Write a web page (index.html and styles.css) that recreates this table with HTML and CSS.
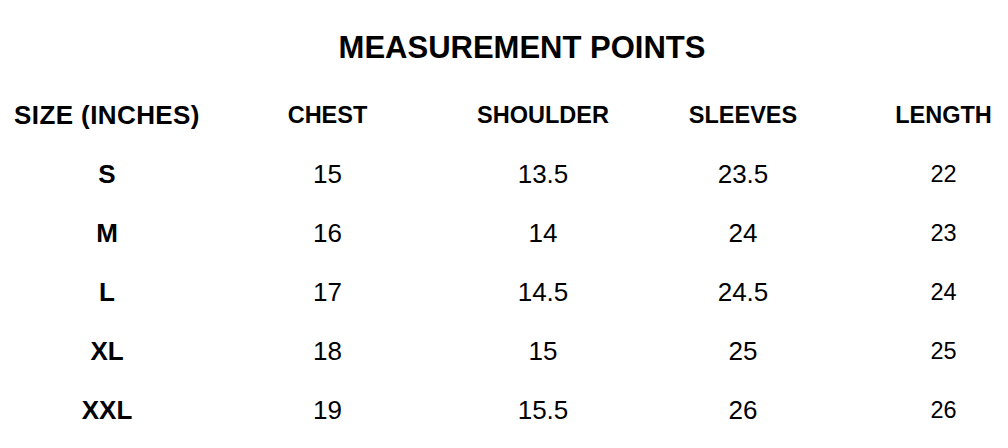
FILE: index.html
```html
<!DOCTYPE html>
<html lang="en">
<head>
<meta charset="utf-8">
<title>Measurement Points</title>
<link rel="stylesheet" href="styles.css">
</head>
<body>
<div class="page">
  <h1 class="title">MEASUREMENT POINTS</h1>
  <div class="table">
    <div class="cell head size-head">SIZE (INCHES)</div>
    <div class="cell head">CHEST</div>
    <div class="cell head">SHOULDER</div>
    <div class="cell head">SLEEVES</div>
    <div class="cell head last">LENGTH</div>

    <div class="cell size">S</div>
    <div class="cell num">15</div>
    <div class="cell num">13.5</div>
    <div class="cell num">23.5</div>
    <div class="cell num small last">22</div>

    <div class="cell size">M</div>
    <div class="cell num">16</div>
    <div class="cell num">14</div>
    <div class="cell num">24</div>
    <div class="cell num small last">23</div>

    <div class="cell size">L</div>
    <div class="cell num">17</div>
    <div class="cell num">14.5</div>
    <div class="cell num">24.5</div>
    <div class="cell num small last">24</div>

    <div class="cell size">XL</div>
    <div class="cell num">18</div>
    <div class="cell num">15</div>
    <div class="cell num">25</div>
    <div class="cell num small last">25</div>

    <div class="cell size">XXL</div>
    <div class="cell num">19</div>
    <div class="cell num">15.5</div>
    <div class="cell num">26</div>
    <div class="cell num small last">26</div>
  </div>
</div>
</body>
</html>
```

FILE: styles.css
```css
html, body {
  margin: 0;
  padding: 0;
  background: #fff;
}

body {
  font-family: "Liberation Sans", Arial, sans-serif;
  color: #000;
  width: 1008px;
  height: 448px;
  overflow: hidden;
}

.page {
  padding-top: 18px;
}

.title {
  margin: 0 0 0 36px;
  height: 59px;
  display: flex;
  align-items: center;
  justify-content: center;
  font-size: 31px;
  font-weight: bold;
}

.table {
  margin-top: 9px;
  display: grid;
  grid-template-columns: 214px 227px 204px 196px 1fr;
  grid-auto-rows: 59px;
}

.cell {
  display: flex;
  align-items: center;
  justify-content: center;
  white-space: nowrap;
}

.head {
  font-size: 23.5px;
  font-weight: bold;
}

.size-head {
  font-size: 26px;
  letter-spacing: 0.4px;
}

.size {
  font-size: 26px;
  font-weight: bold;
}

.num {
  font-size: 26px;
}

.num.small {
  font-size: 23.5px;
}

.last {
  padding-left: 38px;
}
```
